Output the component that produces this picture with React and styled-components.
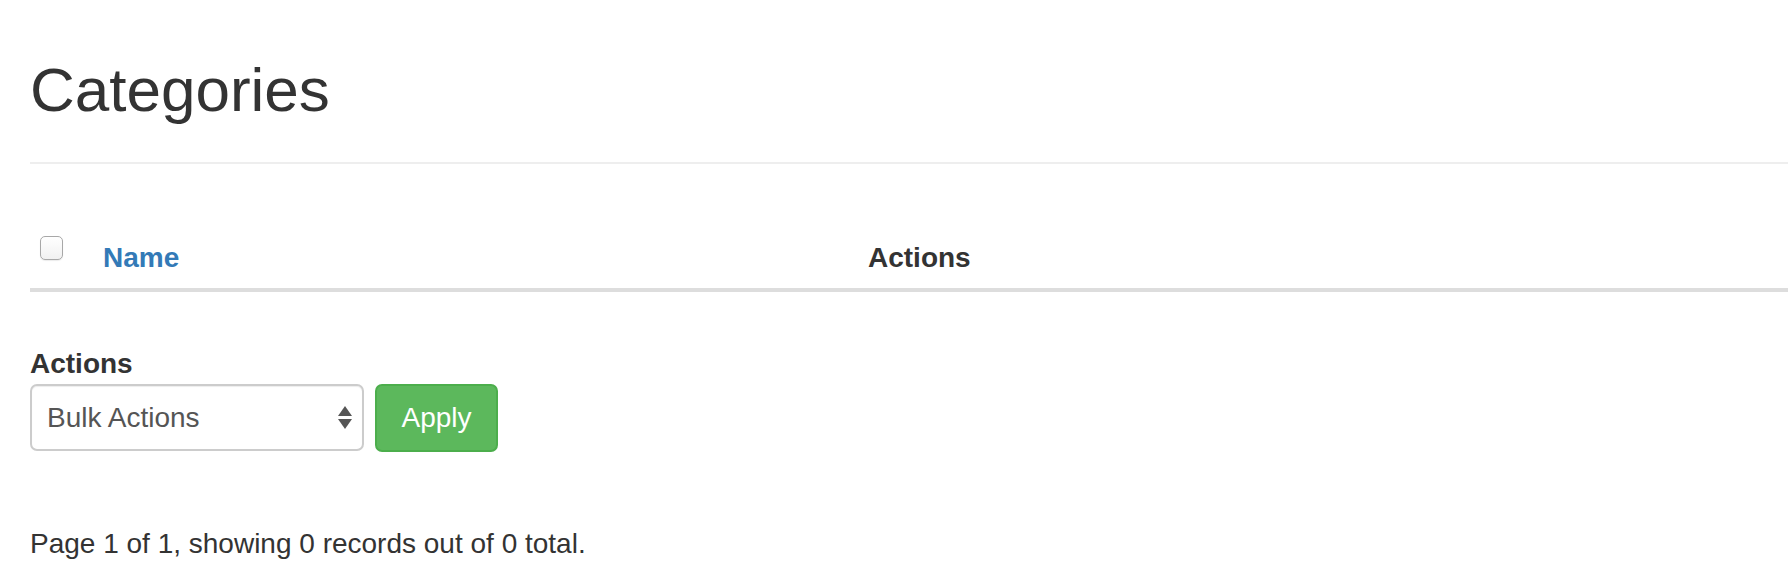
import React from 'react';
import styled, { createGlobalStyle } from 'styled-components';

const GlobalStyle = createGlobalStyle`
  *, *::before, *::after {
    box-sizing: border-box;
  }
  body {
    margin: 0;
    background: #fff;
    color: #333;
    font-family: "Liberation Sans", Arial, sans-serif;
    font-size: 28px;
  }
`;

const Page = styled.div`
  padding: 55px 0 0 30px;
`;

const PageHeader = styled.div`
  padding-bottom: 37px;
  border-bottom: 2px solid #eee;
`;

const Title = styled.h1`
  margin: 0;
  font-size: 62px;
  line-height: 70px;
  font-weight: normal;
  color: #333;
`;

const Table = styled.table`
  width: 100%;
  margin-top: 60px;
  border-collapse: separate;
  border-spacing: 0;
  table-layout: fixed;
`;

const Th = styled.th`
  width: ${p => (p.$width ? `${p.$width}px` : 'auto')};
  padding: ${p => (p.$check ? '12px 0 10px 10px' : '14px 14px 10px')};
  vertical-align: ${p => (p.$check ? 'top' : 'bottom')};
  text-align: left;
  font-size: 28px;
  line-height: 40px;
  font-weight: bold;
  color: #333;
  border-bottom: 4px solid #ddd;
`;

const SortLink = styled.a`
  color: #337ab7;
  text-decoration: none;
`;

const Checkbox = styled.span`
  display: block;
  width: 23px;
  height: 24px;
  border: 1.5px solid #a8a8a8;
  border-radius: 5px;
  background: linear-gradient(#fff, #f1f1f1);
  box-shadow: 0 1px 1px rgba(0, 0, 0, 0.08);
`;

const BulkForm = styled.form`
  margin-top: 52px;
`;

const Label = styled.label`
  display: block;
  font-size: 28px;
  line-height: 40px;
  font-weight: bold;
  color: #333;
`;

const Controls = styled.div`
  display: flex;
  align-items: flex-start;
  gap: 11px;
`;

const Select = styled.div`
  display: flex;
  align-items: center;
  justify-content: space-between;
  width: 334px;
  height: 67px;
  padding: 0 10px 0 15px;
  border: 2px solid #ccc;
  border-radius: 7px;
  background: #fff;
  box-shadow: inset 0 1px 1px rgba(0, 0, 0, 0.075);
  color: #555;
  font-size: 28px;
`;

const Arrows = styled.svg`
  width: 14px;
  height: 23px;
  fill: #555;
`;

const Button = styled.button`
  width: 123px;
  height: 68px;
  padding: 0;
  border: 2px solid #4cae4c;
  border-radius: 7px;
  background: #5cb85c;
  color: #fff;
  font-family: inherit;
  font-size: 28px;
  cursor: pointer;
`;

const Summary = styled.p`
  margin: 72px 0 0;
  font-size: 28px;
  line-height: 40px;
  color: #333;
`;

const App = () => (
  <Page>
    <GlobalStyle />
    <PageHeader>
      <Title>Categories</Title>
    </PageHeader>

    <Table>
      <thead>
        <tr>
          <Th $check $width={59}>
            <Checkbox />
          </Th>
          <Th $width={765}>
            <SortLink href="#">Name</SortLink>
          </Th>
          <Th>Actions</Th>
        </tr>
      </thead>
    </Table>

    <BulkForm onSubmit={e => e.preventDefault()}>
      <Label>Actions</Label>
      <Controls>
        <Select>
          <span>Bulk Actions</span>
          <Arrows viewBox="0 0 14 23">
            <polygon points="7,0 14,10 0,10" />
            <polygon points="0,13 14,13 7,23" />
          </Arrows>
        </Select>
        <Button type="submit">Apply</Button>
      </Controls>
    </BulkForm>

    <Summary>Page 1 of 1, showing 0 records out of 0 total.</Summary>
  </Page>
);

export default App;
